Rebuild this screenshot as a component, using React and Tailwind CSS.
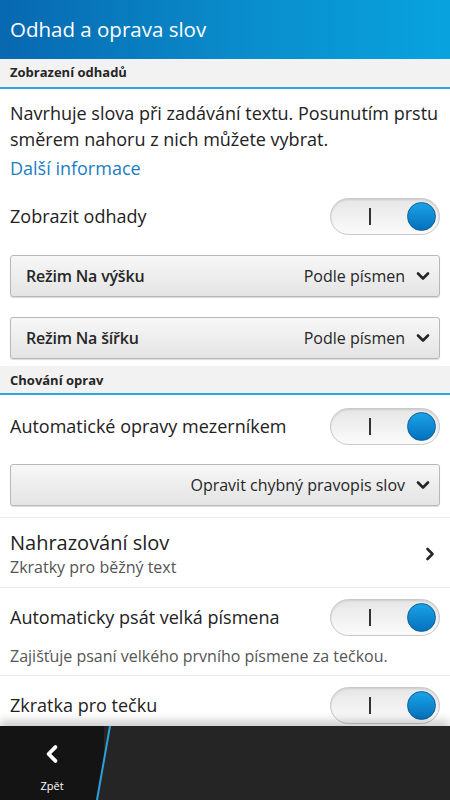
import React from 'react';

const font = { fontFamily: '"Open Sans", "Liberation Sans", sans-serif' };

function Toggle() {
  return (
    <div className="relative flex h-[37px] w-[110px] shrink-0 items-center rounded-full border border-[#c9c9c9] bg-gradient-to-b from-[#e6e6e6] to-[#fbfbfb] shadow-[inset_0_1px_2px_rgba(0,0,0,0.12)]">
      <div className="ml-[38px] h-[17px] w-[2px] bg-[#333]" />
      <div className="absolute right-[3px] top-[3px] h-[29px] w-[29px] rounded-full border border-[#0b5f9c] bg-gradient-to-b from-[#1aa3e6] to-[#0671bd]" />
    </div>
  );
}

function Chevron({ className }) {
  return (
    <svg viewBox="0 0 16 16" className={className} fill="none" stroke="currentColor" strokeWidth="2.6" strokeLinecap="round" strokeLinejoin="round">
      <path d="M3 5.5 L8 10.5 L13 5.5" />
    </svg>
  );
}

function Dropdown({ label, value }) {
  return (
    <div className="mx-[10px] flex h-[42px] items-center rounded-[3px] border border-[#b8b8b8] bg-gradient-to-b from-[#f7f7f7] to-[#e4e4e4] pl-[15px] pr-[8px] shadow-[0_1px_1px_rgba(0,0,0,0.15)]">
      {label && <span className="text-[16px] font-semibold tracking-[-0.2px] text-[#262626]">{label}</span>}
      <span className="ml-auto text-[16px] text-[#262626]">{value}</span>
      <Chevron className="ml-[10px] h-[16px] w-[16px] text-[#262626]" />
    </div>
  );
}

function SectionHeader({ title, tall }) {
  return (
    <div className={`flex items-center border-b-2 border-[#2ba6df] bg-[#f2f2f2] px-[10px] text-[13px] font-bold text-[#262626] ${tall ? 'h-[30px]' : 'h-[29px] pt-[2px]'}`}>
      {title}
    </div>
  );
}

function ToggleRow({ label }) {
  return (
    <div className="flex items-center justify-between px-[10px]">
      <span className="text-[18px] text-[#222]">{label}</span>
      <Toggle />
    </div>
  );
}

export default function App() {
  return (
    <div style={font} className="flex h-[800px] w-[450px] flex-col overflow-hidden bg-white">
      <div className="flex h-[59px] shrink-0 items-center bg-gradient-to-r from-[#0868b0] via-[#0a8aca] to-[#08a3df] px-[10px]">
        <h1 className="text-[20.5px] text-white">Odhad a oprava slov</h1>
      </div>

      <div className="flex-1 overflow-hidden">
        <SectionHeader title="Zobrazení odhadů" tall />
        <p className="px-[10px] pt-[11px] text-[18px] leading-[26px] text-[#222]">
          Navrhuje slova při zadávání textu. Posunutím prstu směrem nahoru z nich můžete vybrat.
        </p>
        <div className="px-[10px] pt-[3px] text-[18px] text-[#1a7ec3]">Další informace</div>

        <div className="pt-[16px]">
          <ToggleRow label="Zobrazit odhady" />
        </div>
        <div className="pt-[20px]">
          <Dropdown label="Režim Na výšku" value="Podle písmen" />
        </div>
        <div className="pt-[20px]">
          <Dropdown label="Režim Na šířku" value="Podle písmen" />
        </div>

        <div className="pt-[7px]">
          <SectionHeader title="Chování oprav" />
        </div>
        <div className="pt-[13px]">
          <ToggleRow label="Automatické opravy mezerníkem" />
        </div>
        <div className="pt-[19px]">
          <Dropdown value="Opravit chybný pravopis slov" />
        </div>

        <div className="mt-[11px] border-t border-[#ececec]">
          <div className="flex items-center justify-between px-[10px] pb-[9px] pt-[12px]">
            <div>
              <div className="text-[20px] leading-[26px] text-[#222]">Nahrazování slov</div>
              <div className="text-[16px] leading-[22px] text-[#555]">Zkratky pro běžný text</div>
            </div>
            <svg viewBox="0 0 16 16" className="mr-[2px] h-[16px] w-[16px] text-[#262626]" fill="none" stroke="currentColor" strokeWidth="2.6" strokeLinecap="round" strokeLinejoin="round">
              <path d="M5.5 3 L10.5 8 L5.5 13" />
            </svg>
          </div>
        </div>

        <div className="border-t border-[#ececec] pt-[11px]">
          <ToggleRow label="Automaticky psát velká písmena" />
          <div className="px-[10px] pb-[7px] pt-[8px] text-[16px] text-[#555]">
            Zajišťuje psaní velkého prvního písmene za tečkou.
          </div>
        </div>

        <div className="border-t border-[#ececec] pt-[11px]">
          <ToggleRow label="Zkratka pro tečku" />
        </div>
      </div>

      <div className="relative flex h-[74px] shrink-0 bg-[#252525] shadow-[0_-6px_8px_rgba(0,0,0,0.18)]">
        <div className="flex w-[104px] flex-col items-center bg-[#141414] pt-[17px] [clip-path:polygon(0_0,110px_0,96px_100%,0_100%)]">
          <svg viewBox="0 0 16 16" className="h-[22px] w-[22px] text-white" fill="none" stroke="currentColor" strokeWidth="2.8" strokeLinecap="round" strokeLinejoin="round">
            <path d="M10.5 3 L5.5 8 L10.5 13" />
          </svg>
          <span className="mt-[14px] text-[11px] leading-[14px] text-white">Zpět</span>
        </div>
        <svg className="absolute left-0 top-0 h-full w-[120px]" viewBox="0 0 120 74" preserveAspectRatio="none">
          <line x1="110" y1="0" x2="97" y2="74" stroke="#2aa0dc" strokeWidth="2" />
        </svg>
      </div>
    </div>
  );
}
